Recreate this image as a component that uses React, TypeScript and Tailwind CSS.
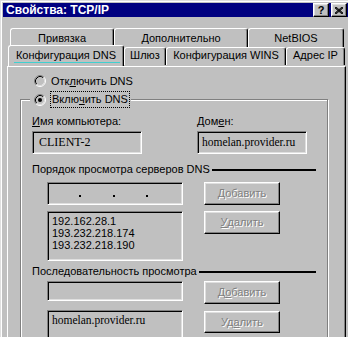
import React from "react";

const font = "font-['Liberation_Sans',Arial,sans-serif]";
const serif = "font-['Liberation_Serif','Times_New_Roman',serif]";

const sunken =
  "border border-t-[#808080] border-l-[#808080] border-b-white border-r-white shadow-[inset_1px_1px_0_#000,inset_-1px_-1px_0_#dfdfdf]";
const raised =
  "border border-t-white border-l-white border-b-black border-r-black shadow-[inset_-1px_-1px_0_#808080,inset_1px_1px_0_#dfdfdf]";

function Radio({ checked }: { checked?: boolean }) {
  return (
    <svg width="12" height="12" viewBox="0 0 12 12" className="shrink-0">
      <path d="M2.11 9.89 A5.5 5.5 0 0 1 9.89 2.11" stroke="#808080" fill="none" />
      <path d="M9.89 2.11 A5.5 5.5 0 0 1 2.11 9.89" stroke="#ffffff" fill="none" />
      <path d="M2.82 9.18 A4.5 4.5 0 0 1 9.18 2.82" stroke="#000000" fill="none" />
      <path d="M9.18 2.82 A4.5 4.5 0 0 1 2.82 9.18" stroke="#dfdfdf" fill="none" />
      {checked && <circle cx="6" cy="6" r="2" fill="#000" />}
    </svg>
  );
}

function U({ children }: { children: React.ReactNode }) {
  return <span className="underline underline-offset-[1px]">{children}</span>;
}

function BackTab({ w, children }: { w: string; children: React.ReactNode }) {
  return (
    <div
      className={`${w} h-[19px] border-l border-t border-r border-l-white border-t-white border-r-black rounded-t-[3px] shadow-[inset_-1px_0_0_#808080] flex justify-center pt-[3px] text-[11px] leading-[13px] text-black`}
    >
      {children}
    </div>
  );
}

function FrontTab({ w, children }: { w: string; children: React.ReactNode }) {
  return (
    <div
      className={`${w} h-[18px] border-l border-t border-r border-l-white border-t-white border-r-black rounded-t-[3px] shadow-[inset_-1px_0_0_#808080] flex justify-center pt-[1px] text-[11px] leading-[13px] text-black`}
    >
      {children}
    </div>
  );
}

function DisabledButton({ h, children }: { h: string; children: React.ReactNode }) {
  return (
    <div
      className={`w-[76px] ${h} ${raised} flex items-center justify-center text-[11px] leading-[13px] text-[#808080] [text-shadow:1px_1px_0_#fff]`}
    >
      {children}
    </div>
  );
}

export default function App() {
  return (
    <div
      className={`${font} w-[348px] h-[337px] overflow-hidden bg-[#c0c0c0] shadow-[inset_1px_1px_0_#dfdfdf,inset_2px_2px_0_#fff] flex flex-col`}
    >
      {/* Title bar */}
      <div className="ml-[3px] mt-[3px] h-[17px] bg-[#000080] flex items-center justify-between pl-[3px] pr-[1px]">
        <span className="text-white font-bold text-[12px] leading-[14px]">Свойства: TCP/IP</span>
        <div className="flex gap-[2px]">
          <div className={`w-[16px] h-[14px] bg-[#c0c0c0] ${raised} flex items-center justify-center text-[11px] font-bold leading-[11px] text-black`}>
            ?
          </div>
          <div className={`w-[16px] h-[14px] bg-[#c0c0c0] ${raised} flex items-center justify-center`}>
            <svg width="8" height="7" viewBox="0 0 8 7">
              <path d="M0 0 L8 7 M1 0 L8 6 M0 1 L7 7 M8 0 L0 7 M7 0 L0 6 M8 1 L1 7" stroke="#000" strokeWidth="0.9" />
            </svg>
          </div>
        </div>
      </div>

      {/* Back row tabs */}
      <div className="mt-[11px] pl-[10px] flex">
        <BackTab w="w-[104px]">Привязка</BackTab>
        <BackTab w="w-[134px]">Дополнительно</BackTab>
        <BackTab w="w-[96px]">NetBIOS</BackTab>
      </div>

      {/* Front row tabs */}
      <div className="pl-[8px] flex relative z-10">
        <div className="relative w-[116px] h-[21px] -mt-[2px] bg-[#c0c0c0] border-l border-t border-r border-l-white border-t-white border-r-black rounded-t-[3px] shadow-[inset_-1px_0_0_#808080] flex justify-center pt-[3px] text-[11px] leading-[13px] text-black">
          Конфигурация DNS
          <div className="absolute left-[5px] top-[16px] w-[106px] h-[1px] bg-[#40d0d0]" />
        </div>
        <FrontTab w="w-[42px]">Шлюз</FrontTab>
        <FrontTab w="w-[120px]">Конфигурация WINS</FrontTab>
        <FrontTab w="w-[59px]">Адрес IP</FrontTab>
      </div>

      {/* Tab page */}
      <div className="ml-[7px] w-[339px] flex-1 border-l border-t border-r border-l-white border-t-white border-r-black shadow-[inset_-1px_0_0_#808080] flex flex-col text-[11px] leading-[13px] text-black">
        {/* Radio 1 */}
        <div className="mt-[8px] ml-[26px] flex items-center h-[12px]">
          <Radio />
          <span className="ml-[5px]">
            Отк<U>л</U>ючить DNS
          </span>
        </div>

        {/* Group box */}
        <div className="relative mt-[12px] ml-[12px] w-[308px] h-[400px] border border-[#808080] shadow-[inset_1px_1px_0_#fff,1px_1px_0_#fff] flex flex-col">
          {/* legend */}
          <div className="absolute -top-[9px] left-[9px] bg-[#c0c0c0] flex items-center pl-[4px] pr-[1px] h-[17px]">
            <Radio checked />
            <span className="ml-[4px] h-[17px] px-[1px] border border-dotted border-black flex items-center">
              Вклю<U>ч</U>ить DNS
            </span>
          </div>

          {/* Name / domain */}
          <div className="mt-[15px] ml-[11px] flex gap-[55px]">
            <div className="flex flex-col w-[110px]">
              <span>
                <U>И</U>мя компьютера:
              </span>
              <div className={`mt-[3px] h-[23px] ${sunken} ${serif} text-[12px] flex items-center pl-[6px]`}>
                CLIENT-2
              </div>
            </div>
            <div className="flex flex-col w-[110px]">
              <span>
                Дом<U>е</U>н:
              </span>
              <div className={`mt-[3px] h-[23px] ${sunken} ${serif} text-[11.5px] flex items-center pl-[4px]`}>
                homelan.provider.ru
              </div>
            </div>
          </div>

          {/* DNS servers label */}
          <div className="mt-[9px] ml-[11px] w-[284px] flex items-center">
            <span className="whitespace-nowrap">Порядок просмотра серверов DNS</span>
            <div className="flex-1 h-[2px] bg-black ml-[2px]" />
          </div>

          <div className="mt-[6px] ml-[26px] flex gap-[21px]">
            <div className={`w-[136px] h-[23px] ${sunken} flex items-center pl-[1px]`}>
              <span className="w-[30px]" />
              <span className="w-[2px] h-[2px] bg-black mt-[4px]" />
              <span className="w-[32px]" />
              <span className="w-[2px] h-[2px] bg-black mt-[4px]" />
              <span className="w-[31px]" />
              <span className="w-[2px] h-[2px] bg-black mt-[4px]" />
            </div>
            <DisabledButton h="h-[23px]">
              <U>Д</U>обавить
            </DisabledButton>
          </div>

          <div className="mt-[6px] ml-[26px] flex gap-[21px] items-start">
            <div className={`w-[136px] h-[50px] ${sunken} flex flex-col pl-[4px] pt-[3px] leading-[12px]`}>
              <span>192.162.28.1</span>
              <span>193.232.218.174</span>
              <span>193.232.218.190</span>
            </div>
            <DisabledButton h="h-[23px]">
              <U>У</U>далить
            </DisabledButton>
          </div>

          {/* Search order label */}
          <div className="mt-[4px] ml-[11px] w-[284px] flex items-center">
            <span className="whitespace-nowrap">Последовательность просмотра</span>
            <div className="flex-1 h-[2px] bg-black ml-[2px]" />
          </div>

          <div className="mt-[3px] ml-[26px] flex gap-[21px] items-start">
            <div className={`w-[136px] h-[20px] ${sunken}`} />
            <DisabledButton h="h-[23px]">
              Д<U>о</U>бавить
            </DisabledButton>
          </div>

          <div className="mt-[6px] ml-[26px] flex gap-[21px] items-start">
            <div className={`w-[136px] h-[50px] ${sunken} ${serif} text-[11.5px] pl-[4px] pt-[3px] leading-[13px]`}>
              homelan.provider.ru
            </div>
            <div className="mt-[1px]">
              <DisabledButton h="h-[22px]">
                Уд<U>а</U>лить
              </DisabledButton>
            </div>
          </div>
        </div>
      </div>
    </div>
  );
}
